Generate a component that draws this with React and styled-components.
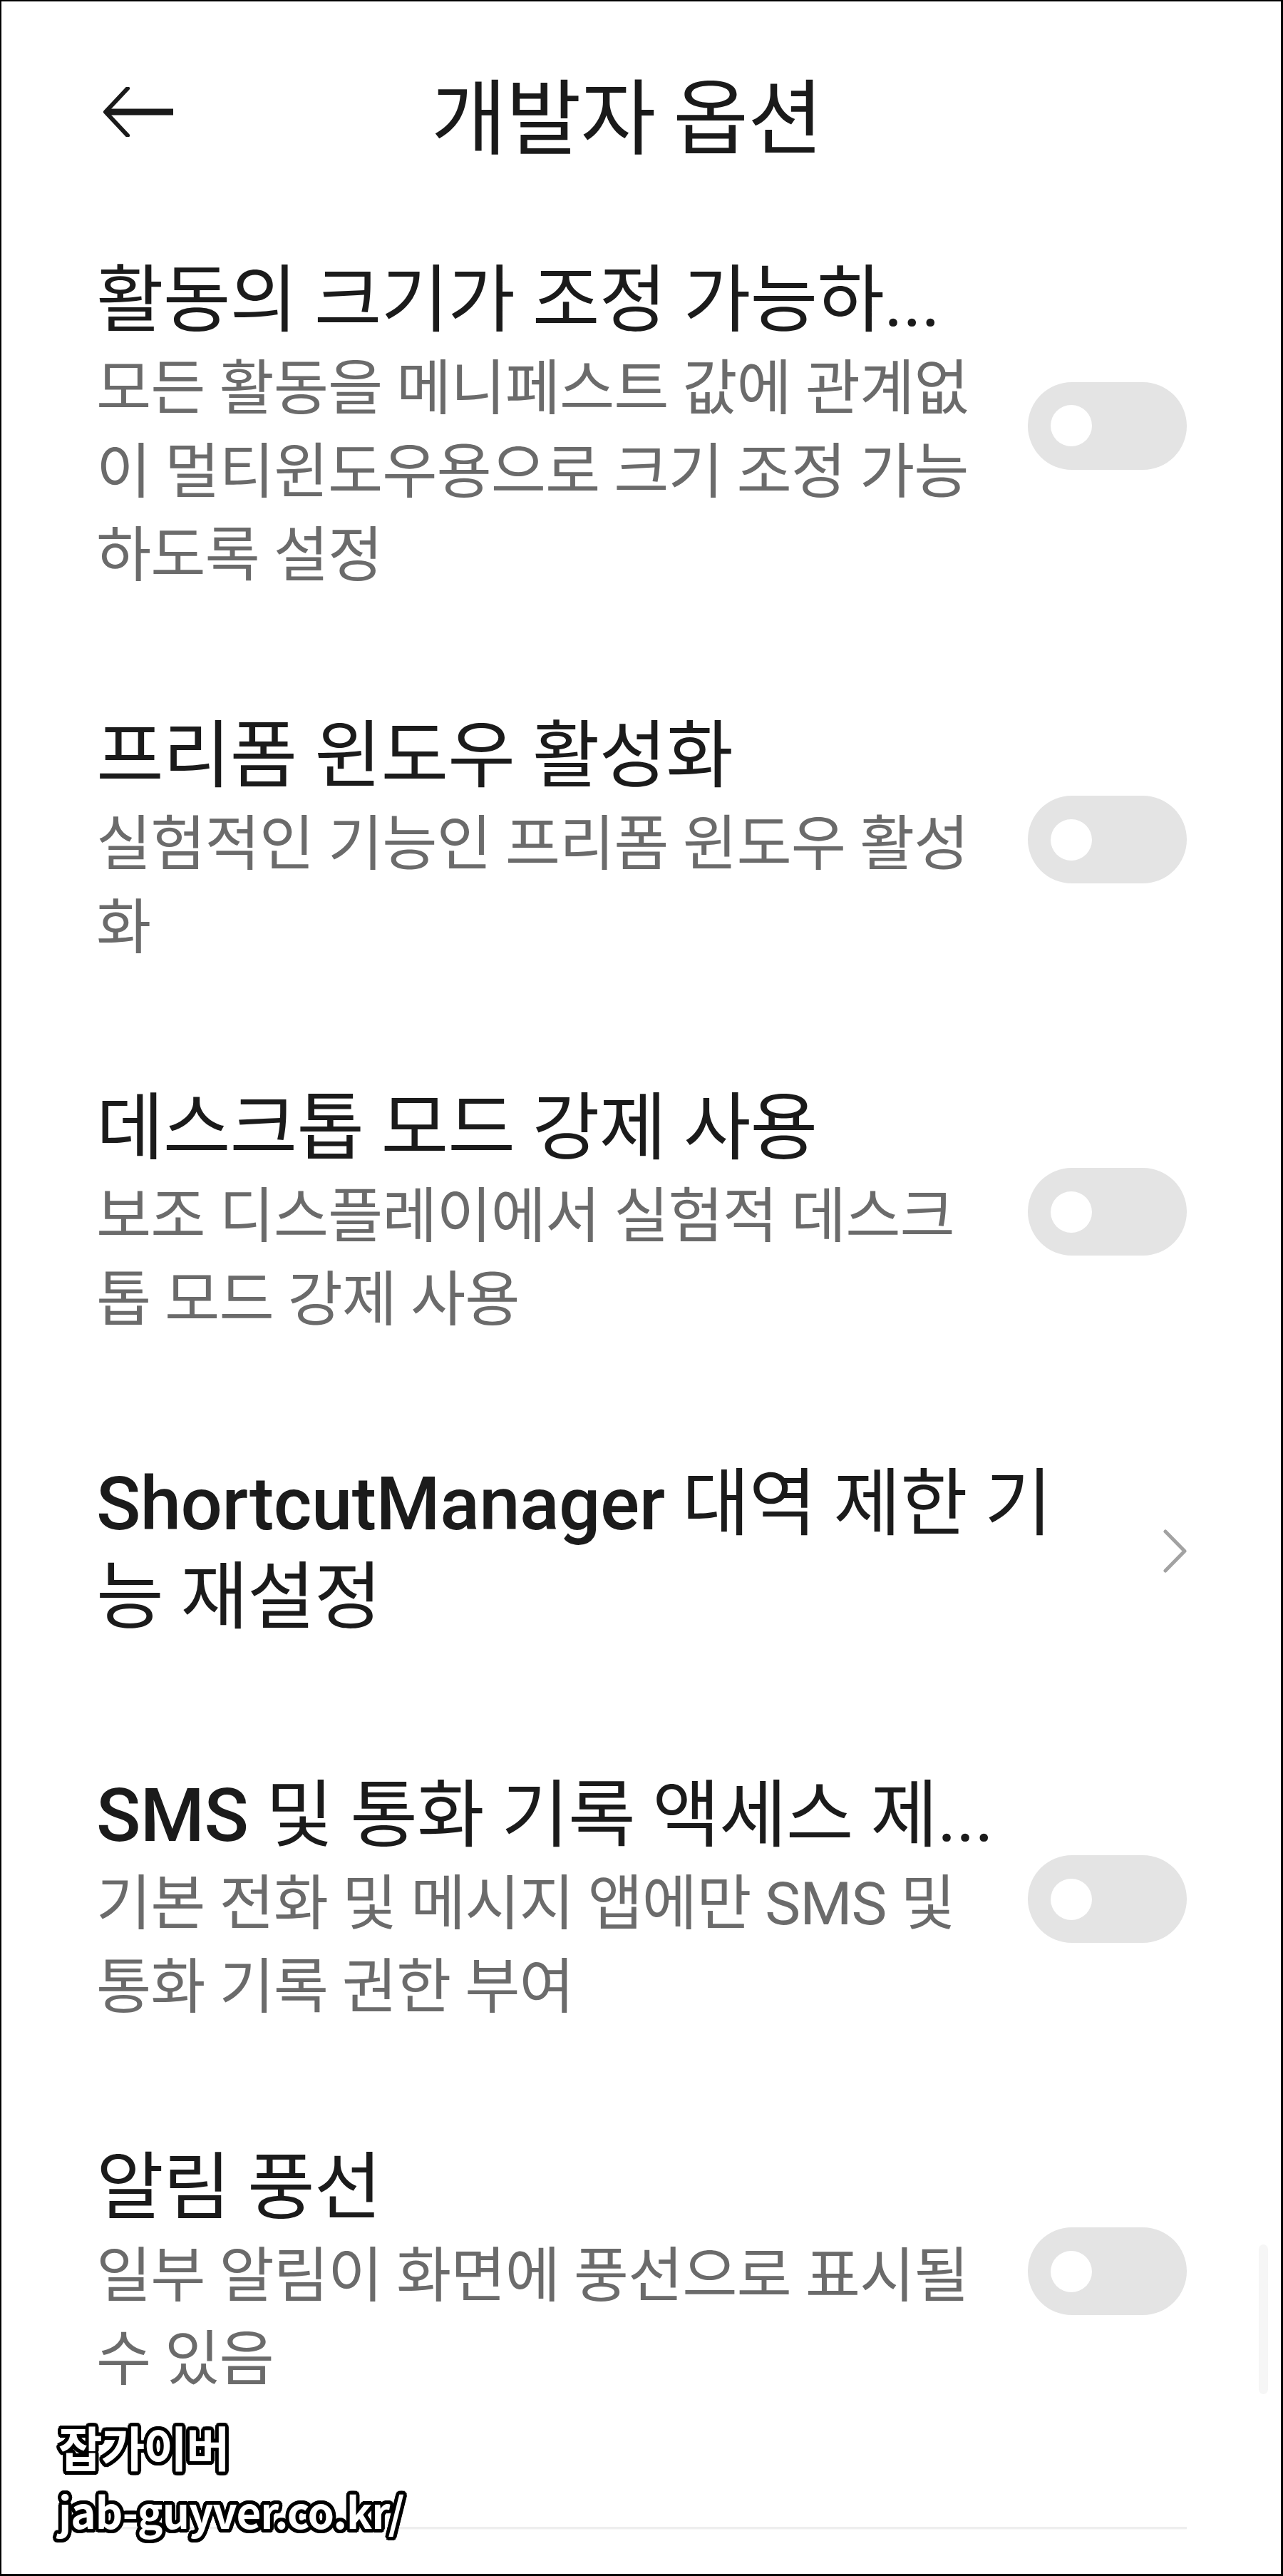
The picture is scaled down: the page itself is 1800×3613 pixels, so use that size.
import React from "react";
import styled, { createGlobalStyle } from "styled-components";

const GlobalStyle = createGlobalStyle`
  html, body { margin: 0; padding: 0; background: #ffffff; }
  body { font-family: Roboto, "Noto Sans CJK KR", sans-serif; }
  * { box-sizing: border-box; }
`;

const outlineShadow = (() => {
  const out = [];
  for (let r = 2; r <= 5; r += 1.5) {
    for (let i = 0; i < 16; i++) {
      const a = (i / 16) * Math.PI * 2;
      out.push(`${(Math.cos(a) * r).toFixed(2)}px ${(Math.sin(a) * r).toFixed(2)}px 0 #000`);
    }
  }
  return out.join(", ");
})();

const Screen = styled.div`
  position: relative;
  width: 1800px;
  height: 3613px;
  border-style: solid;
  border-color: #000;
  border-width: 2px 3px 3px 2px;
  background: #fff;
  overflow: hidden;
  display: flex;
  flex-direction: column;
`;

const Header = styled.header`
  height: 310px;
  display: flex;
  align-items: center;
  padding-left: 141px;
  flex-shrink: 0;
`;

const BackButton = styled.button`
  width: 102px;
  height: 70px;
  padding: 0;
  border: 0;
  background: transparent;
  display: flex;
  align-items: center;
  justify-content: flex-start;
`;

const HeaderTitle = styled.h1`
  margin: 0 0 0 360px;
  font-family: "Noto Sans CJK KR", sans-serif;
  font-weight: 400;
  font-size: 115px;
  line-height: 150px;
  color: #1a1a1a;
  letter-spacing: -1px;
  white-space: nowrap;
`;

const List = styled.main`
  display: flex;
  flex-direction: column;
`;

const Row = styled.div`
  display: flex;
  align-items: center;
  gap: 40px;
  padding: ${(p) => (p.$tall ? "49px 132px 131px 133px" : "44px 132px 113px 133px")};
`;

const TextCol = styled.div`
  flex: 1;
  min-width: 0;
  display: flex;
  flex-direction: column;
`;

const Title = styled.div`
  font-family: Roboto, "Noto Sans CJK KR", sans-serif;
  font-size: 103px;
  line-height: 131px;
  letter-spacing: -1px;
  color: #1b1b1b;
  white-space: nowrap;
`;

const Latin = styled.span`
  font-weight: 500;
  letter-spacing: -0.5px;
`;

const Summary = styled.div`
  font-family: Roboto, "Noto Sans CJK KR", sans-serif;
  font-size: 84px;
  line-height: 117px;
  letter-spacing: -1px;
  color: #6b6b6b;
  white-space: nowrap;
`;

const Track = styled.div`
  position: relative;
  flex-shrink: 0;
  width: 223px;
  height: 123px;
  border-radius: 62px;
  background: #e4e4e4;
  display: flex;
  align-items: center;
  padding-left: 32px;
`;

const Knob = styled.div`
  width: 58px;
  height: 58px;
  border-radius: 50%;
  background: #ffffff;
`;

const ChevronBox = styled.div`
  flex-shrink: 0;
  width: 36px;
  display: flex;
  justify-content: flex-end;
`;

const Divider = styled.div`
  margin: 63px 132px 0 133px;
  height: 3px;
  background: #eeeeee;
  box-shadow: 0 1px 2px rgba(0, 0, 0, 0.04);
`;

const ScrollThumb = styled.div`
  position: absolute;
  right: 18px;
  top: 3146px;
  width: 13px;
  height: 210px;
  border-radius: 7px;
  background: #f6f6f6;
`;

const Watermark = styled.div`
  position: absolute;
  left: 80px;
  top: 3384px;
  display: flex;
  flex-direction: column;
  font-family: "Noto Sans CJK KR", sans-serif;
  font-weight: 700;
  color: #ffffff;
  text-shadow: ${outlineShadow};
`;

const MarkLine = styled.div`
  font-size: ${(p) => p.$size}px;
  line-height: 90px;
  letter-spacing: ${(p) => p.$ls}px;
  white-space: nowrap;
`;

const BackArrow = () => (
  <svg width="102" height="70" viewBox="0 0 102 70" fill="none">
    <path d="M36 2 L5 35 L36 68" stroke="#1a1a1a" strokeWidth="6" strokeLinecap="round" strokeLinejoin="round" />
    <path d="M6 35 H100" stroke="#1a1a1a" strokeWidth="9" strokeLinecap="butt" />
  </svg>
);

const Chevron = () => (
  <svg width="33" height="61" viewBox="0 0 33 61" fill="none">
    <path d="M3 3 L30 30.5 L3 58" stroke="#a2a2a2" strokeWidth="5" strokeLinecap="round" strokeLinejoin="round" />
  </svg>
);

const Toggle = () => (
  <Track>
    <Knob />
  </Track>
);

const items = [
  {
    title: [<>활동의 크기가 조정 가능하...</>],
    summary: ["모든 활동을 메니페스트 값에 관계없", "이 멀티윈도우용으로 크기 조정 가능", "하도록 설정"],
    kind: "toggle",
  },
  {
    title: [<>프리폼 윈도우 활성화</>],
    summary: ["실험적인 기능인 프리폼 윈도우 활성", "화"],
    kind: "toggle",
  },
  {
    title: [<>데스크톱 모드 강제 사용</>],
    summary: ["보조 디스플레이에서 실험적 데스크", "톱 모드 강제 사용"],
    kind: "toggle",
  },
  {
    title: [<><Latin>ShortcutManager</Latin> 대역 제한 기</>, <>능 재설정</>],
    summary: [],
    kind: "link",
  },
  {
    title: [<><Latin>SMS</Latin> 및 통화 기록 액세스 제...</>],
    summary: ["기본 전화 및 메시지 앱에만 SMS 및", "통화 기록 권한 부여"],
    kind: "toggle",
  },
  {
    title: [<>알림 풍선</>],
    summary: ["일부 알림이 화면에 풍선으로 표시될", "수 있음"],
    kind: "toggle",
  },
];

export default function App() {
  return (
    <>
      <GlobalStyle />
      <Screen>
        <Header>
          <BackButton aria-label="뒤로">
            <BackArrow />
          </BackButton>
          <HeaderTitle>개발자 옵션</HeaderTitle>
        </Header>
        <List>
          {items.map((it, i) => (
            <Row key={i} $tall={it.summary.length === 0}>
              <TextCol>
                {it.title.map((t, j) => (
                  <Title key={j}>{t}</Title>
                ))}
                {it.summary.map((s, j) => (
                  <Summary key={j}>{s}</Summary>
                ))}
              </TextCol>
              {it.kind === "toggle" ? (
                <Toggle />
              ) : (
                <ChevronBox>
                  <Chevron />
                </ChevronBox>
              )}
            </Row>
          ))}
        </List>
        <Divider />
        <ScrollThumb />
        <Watermark>
          <MarkLine $size={67} $ls={-2}>잡가이버</MarkLine>
          <MarkLine $size={60} $ls={-1}>jab-guyver.co.kr/</MarkLine>
        </Watermark>
      </Screen>
    </>
  );
}
